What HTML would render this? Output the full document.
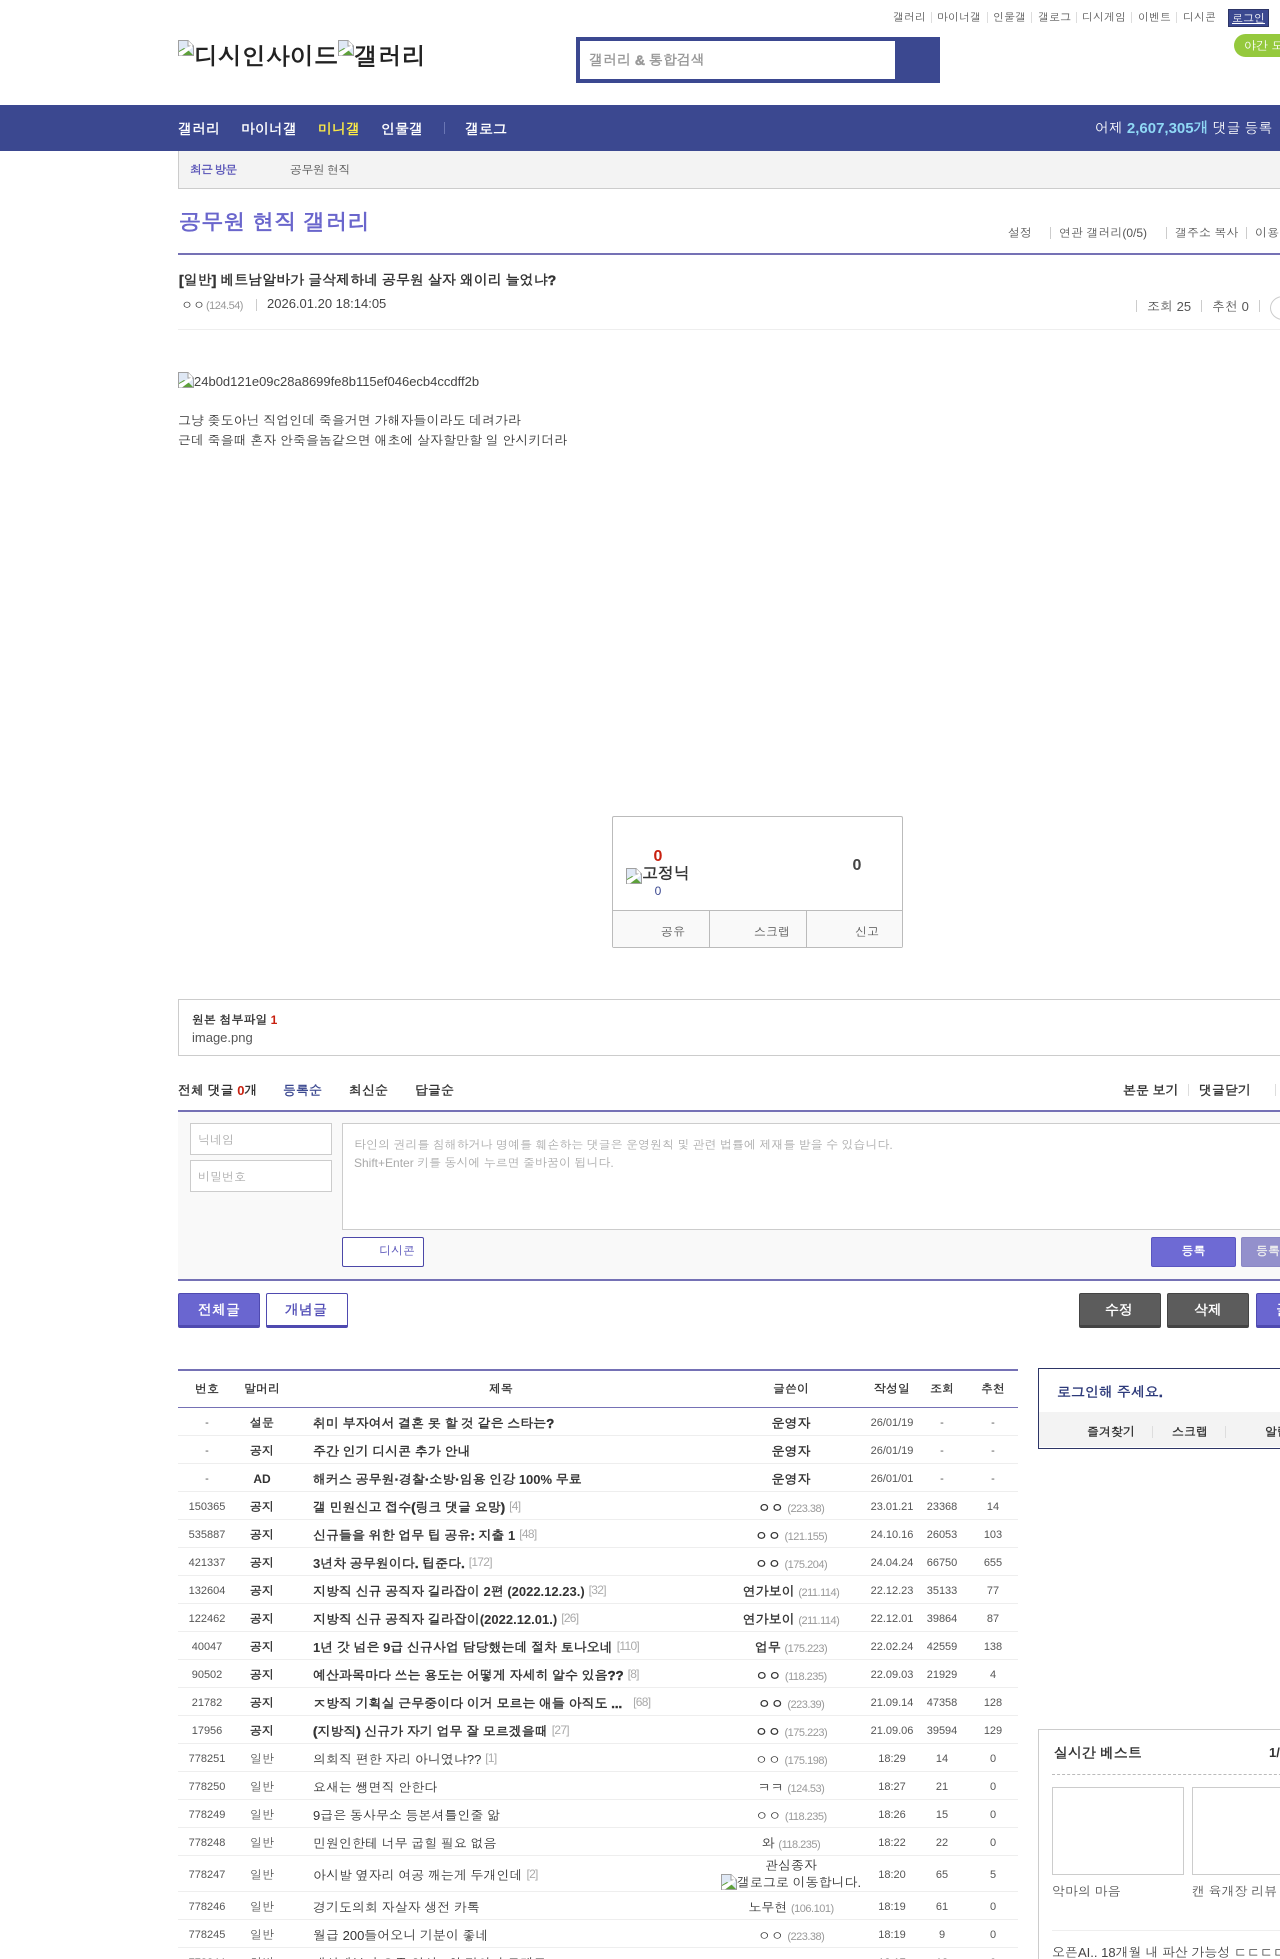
<!DOCTYPE html>
<html lang="ko"><head><meta charset="utf-8"><title>공무원 현직 갤러리</title>
<style>
html,body{margin:0;padding:0;background:#fff;height:1959px;overflow:hidden}
#p{width:1280px;height:1959px;position:relative;overflow:hidden;font-family:"Liberation Sans",Dotum,"Noto Sans CJK KR",sans-serif;font-size:12px;color:#333}
.a{position:absolute;white-space:nowrap;line-height:20px}
.b{position:absolute}
.s{position:absolute;width:1px;height:11px;background:#ccc}
.g{color:#555}
.k{font-weight:600;-webkit-text-stroke:.035em}
.L{font-weight:bold;-webkit-text-stroke:0}
.br{position:absolute;width:16px;height:16px}
table{position:absolute;left:178px;top:1369px;width:840px;border-collapse:separate;border-spacing:0;table-layout:fixed;border-top:2px solid #7571b5}
th{height:34px;padding:0 0 2px;border-bottom:1px solid #7571b5;font-size:12px;font-weight:600;-webkit-text-stroke:.03em;color:#333;text-align:center;box-sizing:content-box}
td{height:24px;padding:3px 0 0;border-bottom:1px solid #eee;text-align:center;font-size:11px;color:#555;white-space:nowrap;overflow:visible}
td.t{text-align:left;padding:2px 0 0 25px;height:25px;font-size:13px;color:#333}
td.w{font-size:13px;color:#333;padding-top:2px;height:25px}
tr.n td.h,tr.n td.t,tr.n td.w{font-weight:600;-webkit-text-stroke:.035em;color:#333}
td.h{font-size:12px;color:#555;padding-top:2px;height:25px}
i{font-style:normal;font-weight:normal;font-size:11px;color:#999;letter-spacing:-.5px;-webkit-text-stroke:0}
u{text-decoration:none;font-weight:normal;font-size:12px;letter-spacing:-.7px;color:#aaa;margin-left:4px;position:relative;top:-2px;-webkit-text-stroke:0}
</style></head><body><div id="p">
<svg width="0" height="0" style="position:absolute"><defs><symbol id="bk" viewBox="0 0 16 16"><path d="M.5.5H10L15.5 6V15.5H.5Z" fill="#dfe8f5" stroke="#a0a0a0"/><path d="M10 .5V6H15.5" fill="#fff" stroke="#a0a0a0"/><path d="M1 15V11L6 8L11 11L15 15Z" fill="#5da03a"/><path d="M1 12L14 5V8L4 15.5H1Z" fill="#fff"/></symbol></defs></svg>

<!-- top links -->
<div class="a g" style="left:893px;top:8px;font-size:11px">갤러리</div><div class="s" style="left:931px;top:12px;background:#ddd"></div>
<div class="a g" style="left:937px;top:8px;font-size:11px">마이너갤</div><div class="s" style="left:987px;top:12px;background:#ddd"></div>
<div class="a g" style="left:993px;top:8px;font-size:11px">인물갤</div><div class="s" style="left:1031px;top:12px;background:#ddd"></div>
<div class="a g" style="left:1038px;top:8px;font-size:11px">갤로그</div><div class="s" style="left:1076px;top:12px;background:#ddd"></div>
<div class="a g" style="left:1082px;top:8px;font-size:11px">디시게임</div><div class="s" style="left:1131px;top:12px;background:#ddd"></div>
<div class="a g" style="left:1138px;top:8px;font-size:11px">이벤트</div><div class="s" style="left:1176px;top:12px;background:#ddd"></div>
<div class="a g" style="left:1183px;top:8px;font-size:11px">디시콘</div>
<div class="a" style="left:1228px;top:9px;width:39px;height:16px;border:1px solid #2d3566;background:#3b4890;color:#fff;font-size:11px;text-align:center;line-height:18px;text-decoration:underline">로그인</div>
<div class="a" style="left:1234px;top:34px;width:60px;height:23px;border-radius:12px 0 0 12px;background:#95c93d;color:#fff;font-size:12px;line-height:24px;padding-left:10px">야간 모드</div>

<!-- logo -->
<svg class="br" style="left:178px;top:40px"><use href="#bk"/></svg>
<div class="a k" style="left:194px;top:43px;font-size:24px;line-height:30px;color:#222">디시인사이드</div>
<svg class="br" style="left:338px;top:40px"><use href="#bk"/></svg>
<div class="a k" style="left:354px;top:43px;font-size:24px;line-height:30px;color:#222">갤러리</div>

<!-- search -->
<div class="b" style="left:576px;top:37px;width:364px;height:46px;background:#3b4890"></div>
<div class="b" style="left:580px;top:41px;width:315px;height:38px;background:#fff"></div>
<div class="a k" style="left:589px;top:50px;font-size:14px;color:#999">갤러리 &amp; 통합검색</div>

<!-- nav -->
<div class="b" style="left:0;top:105px;width:1280px;height:46px;background:#3b4890"></div>
<div class="a k" style="left:178px;top:119px;font-size:14px;color:#fff">갤러리</div>
<div class="a k" style="left:241px;top:119px;font-size:14px;color:#fff">마이너갤</div>
<div class="a k" style="left:318px;top:119px;font-size:14px;color:#ffed45">미니갤</div>
<div class="a k" style="left:381px;top:119px;font-size:14px;color:#fff">인물갤</div>
<div class="s" style="left:444px;top:122px;height:12px;background:#6a76b4"></div>
<div class="a k" style="left:465px;top:119px;font-size:14px;color:#fff">갤로그</div>
<div class="a" style="left:1095px;top:118px;font-size:14px;color:#fff">어제 <span style="color:#8fd8f5;font-size:15px"><span class="L">2,607,305</span><span class="k">개</span></span> 댓글 등록</div>

<!-- recent -->
<div class="b" style="left:178px;top:151px;width:1102px;height:37px;background:#f3f3f3;border-left:1px solid #ccc;border-bottom:1px solid #ccc"></div>
<div class="a k" style="left:190px;top:160px;color:#5a55b8;letter-spacing:-1px">최근 방문</div>
<div class="a g" style="left:290px;top:160px;letter-spacing:-.6px">공무원 현직</div>

<!-- title -->
<div class="a k" style="left:179px;top:207px;font-size:22px;line-height:32px;color:#6a66cc;letter-spacing:.3px">공무원 현직 갤러리</div>
<div class="a g" style="left:1008px;top:223px">설정</div><div class="s" style="left:1050px;top:227px;height:12px"></div>
<div class="a g" style="left:1059px;top:223px">연관 갤러리(0/5)</div><div class="s" style="left:1166px;top:227px;height:12px"></div>
<div class="a g" style="left:1175px;top:223px">갤주소 복사</div><div class="s" style="left:1246px;top:227px;height:12px"></div>
<div class="a g" style="left:1255px;top:223px">이용</div>
<div class="b" style="left:178px;top:253px;width:1102px;height:2px;background:#7571b5"></div>

<!-- post head -->
<div class="a k" style="left:179px;top:270px;font-size:14px;color:#333">[일반] 베트남알바가 글삭제하네 공무원 살자 왜이리 늘었냐?</div>
<div class="a" style="left:181px;top:295px;font-size:12px;color:#333">ㅇㅇ<i style="margin-left:1px">(124.54)</i></div>
<div class="s" style="left:256px;top:299px;height:12px"></div>
<div class="a" style="left:267px;top:294px;font-size:13px;color:#444">2026.01.20 18:14:05</div>
<div class="s" style="left:1136px;top:300px;height:12px"></div>
<div class="a g" style="left:1147px;top:297px;font-size:13px">조회 25</div>
<div class="s" style="left:1201px;top:300px;height:12px"></div>
<div class="a g" style="left:1212px;top:297px;font-size:13px">추천 0</div>
<div class="s" style="left:1259px;top:300px;height:12px"></div>
<div class="b" style="left:1270px;top:296px;width:24px;height:22px;border:1px solid #ccc;border-radius:50%"></div>
<div class="b" style="left:178px;top:329px;width:1102px;height:1px;background:#eee"></div>

<!-- body -->
<svg class="br" style="left:178px;top:372px"><use href="#bk"/></svg>
<div class="a" style="left:194px;top:372px;font-size:13px;color:#444">24b0d121e09c28a8699fe8b115ef046ecb4ccdff2b</div>
<div class="a" style="left:178px;top:411px;font-size:13px;color:#333">그냥 좆도아닌 직업인데 죽을거면 가해자들이라도 데려가라</div>
<div class="a" style="left:178px;top:431px;font-size:13px;color:#333">근데 죽을때 혼자 안죽을놈같으면 애초에 살자할만할 일 안시키더라</div>

<!-- vote -->
<div class="b" style="left:612px;top:816px;width:289px;height:130px;border:1px solid #bbb;border-radius:2px"></div>
<div class="b" style="left:613px;top:910px;width:289px;height:36px;background:#f9f9f9;border-top:1px solid #bbb"></div>
<div class="b" style="left:709px;top:910px;width:1px;height:37px;background:#bbb"></div>
<div class="b" style="left:806px;top:910px;width:1px;height:37px;background:#bbb"></div>
<div class="a" style="left:648px;top:847px;width:20px;text-align:center;font-size:16px;font-weight:bold;color:#c8200f">0</div>
<svg class="br" style="left:626px;top:868px"><use href="#bk"/></svg>
<div class="a k" style="left:642px;top:865px;font-size:16px;color:#333">고정닉</div>
<div class="a" style="left:648px;top:881px;width:20px;text-align:center;font-size:12px;color:#3b4890">0</div>
<div class="a" style="left:847px;top:856px;width:20px;text-align:center;font-size:16px;font-weight:bold;color:#444">0</div>
<div class="a g" style="left:661px;top:922px">공유</div>
<div class="a g" style="left:754px;top:922px">스크랩</div>
<div class="a g" style="left:855px;top:922px">신고</div>

<!-- attach -->
<div class="b" style="left:178px;top:999px;width:1102px;height:55px;border:1px solid #ccc"></div>
<div class="a k" style="left:192px;top:1010px;color:#333">원본 첨부파일 <span class="L" style="color:#c8200f">1</span></div>
<div class="a g" style="left:192px;top:1028px;font-size:13px">image.png</div>

<!-- comments -->
<div class="a k" style="left:178px;top:1081px;font-size:13px;color:#333">전체 댓글 <span class="L" style="color:#c8200f">0</span>개</div>
<div class="a k" style="left:283px;top:1081px;font-size:13px;color:#3b4890">등록순</div>
<div class="a k" style="left:349px;top:1081px;font-size:13px;color:#333">최신순</div>
<div class="a k" style="left:415px;top:1081px;font-size:13px;color:#333">답글순</div>
<div class="a k" style="left:1123px;top:1081px;font-size:13px;color:#333">본문 보기</div>
<div class="s" style="left:1188px;top:1084px;height:12px;background:#ddd"></div>
<div class="a k" style="left:1199px;top:1081px;font-size:13px;color:#333">댓글닫기</div>
<div class="s" style="left:1275px;top:1084px;height:12px;background:#ddd"></div>
<div class="b" style="left:178px;top:1110px;width:1102px;height:167px;background:#f9f9f9;border-top:2px solid #7571b5;border-bottom:2px solid #7571b5"></div>
<div class="b" style="left:190px;top:1123px;width:140px;height:30px;border:1px solid #ccc;background:#fff"></div>
<div class="a" style="left:198px;top:1130px;color:#aaa">닉네임</div>
<div class="b" style="left:190px;top:1160px;width:140px;height:30px;border:1px solid #ccc;background:#fff"></div>
<div class="a" style="left:198px;top:1167px;color:#aaa">비밀번호</div>
<div class="b" style="left:342px;top:1123px;width:960px;height:105px;border:1px solid #ccc;background:#fff"></div>
<div class="a" style="left:354px;top:1135px;color:#aaa">타인의 권리를 침해하거나 명예를 훼손하는 댓글은 운영원칙 및 관련 법률에 제재를 받을 수 있습니다.</div>
<div class="a" style="left:354px;top:1153px;color:#aaa">Shift+Enter 키를 동시에 누르면 줄바꿈이 됩니다.</div>
<div class="b" style="left:342px;top:1237px;width:80px;height:28px;border:1px solid #4c48a8;border-radius:2px;background:#fff"></div>
<div class="a" style="left:379px;top:1241px;color:#5551b8">디시콘</div>
<div class="a k" style="left:1151px;top:1237px;width:83px;height:28px;border:1px solid #5a56c0;border-radius:2px;background:#6e6ad4;color:#fff;text-align:center;line-height:27px">등록</div>
<div class="a k" style="left:1241px;top:1237px;width:60px;height:28px;border:1px solid #8a87c4;border-radius:2px;background:#9390cc;color:#eee;line-height:27px;padding-left:14px">등록</div>

<!-- buttons -->
<div class="a k" style="left:178px;top:1293px;width:80px;height:31px;border:1px solid #4f4ab0;border-bottom-width:3px;border-radius:2px;background:#6a66d0;color:#fff;font-size:14px;text-align:center;line-height:33px">전체글</div>
<div class="a k" style="left:266px;top:1293px;width:78px;height:31px;border:1px solid #4f4ab0;border-bottom-width:3px;border-radius:2px;background:#fff;color:#5551b8;font-size:14px;text-align:center;line-height:33px;padding-right:2px">개념글</div>
<div class="a k" style="left:1079px;top:1293px;width:78px;height:31px;border:1px solid #444;border-bottom-width:3px;border-radius:2px;background:#5c5c5c;color:#fff;font-size:14px;text-align:center;line-height:33px;padding-right:2px">수정</div>
<div class="a k" style="left:1167px;top:1293px;width:80px;height:31px;border:1px solid #444;border-bottom-width:3px;border-radius:2px;background:#5c5c5c;color:#fff;font-size:14px;text-align:center;line-height:33px">삭제</div>
<div class="a k" style="left:1256px;top:1293px;width:60px;height:31px;border:1px solid #4f4ab0;border-bottom-width:3px;border-radius:2px;background:#6a66d0;color:#fff;font-size:14px;line-height:33px;padding-left:19px">글쓰기</div>

<!-- list -->
<table>
<colgroup><col style="width:58px"><col style="width:52px"><col style="width:426px"><col style="width:154px"><col style="width:48px"><col style="width:52px"><col style="width:50px"></colgroup>
<tr><th>번호</th><th>말머리</th><th>제목</th><th>글쓴이</th><th>작성일</th><th>조회</th><th>추천</th></tr>
<tr class="n"><td>-</td><td class="h">설문</td><td class="t">취미 부자여서 결혼 못 할 것 같은 스타는?</td><td class="w">운영자</td><td>26/01/19</td><td>-</td><td>-</td></tr>
<tr class="n"><td>-</td><td class="h">공지</td><td class="t">주간 인기 디시콘 추가 안내</td><td class="w">운영자</td><td>26/01/19</td><td>-</td><td>-</td></tr>
<tr class="n"><td>-</td><td class="h"><span class="L">AD</span></td><td class="t">해커스 공무원·경찰·소방·임용 인강 <span class="L">100%</span> 무료</td><td class="w">운영자</td><td>26/01/01</td><td>-</td><td>-</td></tr>
<tr class="n"><td>150365</td><td class="h">공지</td><td class="t">갤 민원신고 접수(링크 댓글 요망)<u>[4]</u></td><td class="w">ㅇㅇ <i>(223.38)</i></td><td>23.01.21</td><td>23368</td><td>14</td></tr>
<tr class="n"><td>535887</td><td class="h">공지</td><td class="t">신규들을 위한 업무 팁 공유: 지출 <span class="L">1</span><u>[48]</u></td><td class="w">ㅇㅇ <i>(121.155)</i></td><td>24.10.16</td><td>26053</td><td>103</td></tr>
<tr class="n"><td>421337</td><td class="h">공지</td><td class="t"><span class="L">3</span>년차 공무원이다. 팁준다.<u>[172]</u></td><td class="w">ㅇㅇ <i>(175.204)</i></td><td>24.04.24</td><td>66750</td><td>655</td></tr>
<tr class="n"><td>132604</td><td class="h">공지</td><td class="t">지방직 신규 공직자 길라잡이 <span class="L">2</span>편 <span class="L">(2022.12.23.)</span><u>[32]</u></td><td class="w">연가보이 <i>(211.114)</i></td><td>22.12.23</td><td>35133</td><td>77</td></tr>
<tr class="n"><td>122462</td><td class="h">공지</td><td class="t">지방직 신규 공직자 길라잡이<span class="L">(2022.12.01.)</span><u>[26]</u></td><td class="w">연가보이 <i>(211.114)</i></td><td>22.12.01</td><td>39864</td><td>87</td></tr>
<tr class="n"><td>40047</td><td class="h">공지</td><td class="t"><span class="L">1</span>년 갓 넘은 <span class="L">9</span>급 신규사업 담당했는데 절차 토나오네<u>[110]</u></td><td class="w">업무 <i>(175.223)</i></td><td>22.02.24</td><td>42559</td><td>138</td></tr>
<tr class="n"><td>90502</td><td class="h">공지</td><td class="t">예산과목마다 쓰는 용도는 어떻게 자세히 알수 있음??<u>[8]</u></td><td class="w">ㅇㅇ <i>(118.235)</i></td><td>22.09.03</td><td>21929</td><td>4</td></tr>
<tr class="n"><td>21782</td><td class="h">공지</td><td class="t">ㅈ방직 기획실 근무중이다 이거 모르는 애들 아직도 ...<u style="margin-left:11px">[68]</u></td><td class="w">ㅇㅇ <i>(223.39)</i></td><td>21.09.14</td><td>47358</td><td>128</td></tr>
<tr class="n"><td>17956</td><td class="h">공지</td><td class="t">(지방직) 신규가 자기 업무 잘 모르겠을때<u>[27]</u></td><td class="w">ㅇㅇ <i>(175.223)</i></td><td>21.09.06</td><td>39594</td><td>129</td></tr>
<tr><td>778251</td><td class="h">일반</td><td class="t">의회직 편한 자리 아니였냐??<u>[1]</u></td><td class="w">ㅇㅇ <i>(175.198)</i></td><td>18:29</td><td>14</td><td>0</td></tr>
<tr><td>778250</td><td class="h">일반</td><td class="t">요새는 쌩면직 안한다</td><td class="w">ㅋㅋ <i>(124.53)</i></td><td>18:27</td><td>21</td><td>0</td></tr>
<tr><td>778249</td><td class="h">일반</td><td class="t">9급은 동사무소 등본셔틀인줄 앎</td><td class="w">ㅇㅇ <i>(118.235)</i></td><td>18:26</td><td>15</td><td>0</td></tr>
<tr><td>778248</td><td class="h">일반</td><td class="t">민원인한테 너무 굽힐 필요 없음</td><td class="w">와 <i>(118.235)</i></td><td>18:22</td><td>22</td><td>0</td></tr>
<tr><td style="height:32px">778247</td><td class="h" style="height:33px">일반</td><td class="t" style="height:33px">아시발 옆자리 여공 깨는게 두개인데<u>[2]</u></td><td class="w" style="line-height:16px;position:relative;height:33px">관심종자<br><svg style="width:16px;height:16px;vertical-align:-3px"><use href="#bk"/></svg>갤로그로 이동합니다.</td><td>18:20</td><td>65</td><td>5</td></tr>
<tr><td>778246</td><td class="h">일반</td><td class="t">경기도의회 자살자 생전 카톡</td><td class="w">노무현 <i>(106.101)</i></td><td>18:19</td><td>61</td><td>0</td></tr>
<tr><td>778245</td><td class="h">일반</td><td class="t">월급 200들어오니 기분이 좋네</td><td class="w">ㅇㅇ <i>(223.38)</i></td><td>18:19</td><td>9</td><td>0</td></tr>
<tr><td>778244</td><td class="h">일반</td><td class="t">대선때보니 요즘 일시 8할 편의가 크게도</td><td class="w">ㅇㅇ <i>(118.235)</i></td><td>18:17</td><td>18</td><td>0</td></tr>
</table>

<!-- login box -->
<div class="b" style="left:1038px;top:1368px;width:260px;height:79px;border:1px solid #2d3566;background:#fff"></div>
<div class="b" style="left:1039px;top:1412px;width:260px;height:35px;background:#f3f3f3"></div>
<div class="a k" style="left:1057px;top:1382px;font-size:14px;color:#2d3a7a">로그인해 주세요.</div>
<div class="a k" style="left:1087px;top:1422px;color:#333">즐겨찾기</div><div class="s" style="left:1152px;top:1426px;height:12px;background:#ddd"></div>
<div class="a k" style="left:1172px;top:1422px;color:#333">스크랩</div><div class="s" style="left:1225px;top:1426px;height:12px;background:#ddd"></div>
<div class="a k" style="left:1265px;top:1422px;color:#333">알림</div>

<!-- best box -->
<div class="b" style="left:1038px;top:1729px;width:300px;height:300px;border:1px solid #ccc"></div>
<div class="a k" style="left:1054px;top:1743px;font-size:14px;color:#333">실시간 베스트</div>
<div class="a" style="left:1269px;top:1743px;font-size:13px;font-weight:bold;color:#333">1/4</div>
<div class="b" style="left:1052px;top:1774px;width:240px;border-top:1px dashed #bbb"></div>
<div class="b" style="left:1052px;top:1787px;width:130px;height:86px;border:1px solid #ccc"></div>
<div class="b" style="left:1192px;top:1787px;width:130px;height:86px;border:1px solid #ccc"></div>
<div class="a g" style="left:1052px;top:1882px;font-size:13px">악마의 마음</div>
<div class="a g" style="left:1192px;top:1882px;font-size:13px">캔 육개장 리뷰 + 후기</div>
<div class="b" style="left:1052px;top:1930px;width:240px;height:1px;background:#eee"></div>
<div class="a" style="left:1052px;top:1943px;font-size:13px;color:#444">오픈AI.. 18개월 내 파산 가능성 ㄷㄷㄷㄷㄷ</div>
</div></body></html>
